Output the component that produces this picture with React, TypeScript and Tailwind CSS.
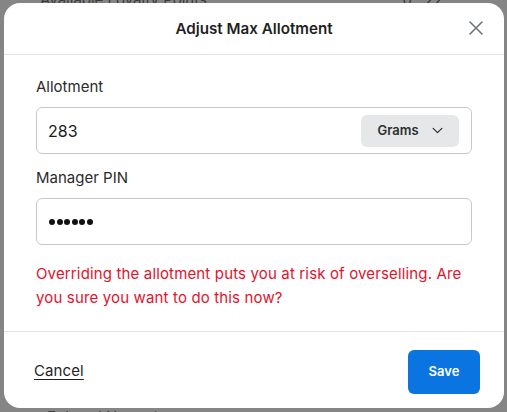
import React from 'react';

const font = { fontFamily: 'Inter, "Liberation Sans", sans-serif' };

const App: React.FC = () => {
  return (
    <div className="relative w-[507px] h-[412px] overflow-hidden bg-[#858585]" style={font}>
      {/* page behind the dialog */}
      <div className="flex flex-col h-full text-[#3b3b3b] text-[15px]">
        <div className="flex justify-between items-center h-[10px] pl-10 pr-16 -mt-[5px]">
          <span>Available Loyalty Points</span>
          <span>0 &nbsp;&nbsp;22</span>
        </div>
        <div className="mt-auto pl-[47px] h-[6px]">
          <span>Entered Name *</span>
        </div>
      </div>

      {/* dialog */}
      <div className="absolute left-[4px] top-[3px] w-[500px] h-[405px] bg-white rounded-[16px] flex flex-col">
        <div className="relative h-[52px] flex items-center justify-center border-b border-[#e3e3e3]">
          <h2 className="text-[15.2px] font-semibold text-[#1f1f1f] mt-[1px]">Adjust Max Allotment</h2>
          <button className="absolute right-[21px] top-[18px] w-[14px] h-[14px] text-[#6f767b]">
            <svg viewBox="0 0 14 14" className="w-[14px] h-[14px]" fill="none" stroke="currentColor" strokeWidth="1.6" strokeLinecap="round">
              <path d="M1 1l12 12M13 1L1 13" />
            </svg>
          </button>
        </div>

        <div className="flex-1 px-8 pt-[20px] border-b border-[#e3e3e3]">
          <label className="block text-[15px] text-[#2b2b2b] leading-[24px]">Allotment</label>
          <div className="mt-[8px] h-[47px] border border-[#c9c9c9] rounded-[6px] flex items-center pl-[11px] pr-[12px]">
            <span className="flex-1 text-[16px] text-[#1a1a1a]">283</span>
            <button className="w-[98px] h-[32px] rounded-[6px] bg-[#e5e7e9] flex items-center justify-center gap-[13px] text-[#2e2e2e]">
              <span className="text-[13px] font-semibold">Grams</span>
              <svg viewBox="0 0 12 8" className="w-[11px] h-[7px]" fill="none" stroke="currentColor" strokeWidth="1.4" strokeLinecap="round" strokeLinejoin="round">
                <path d="M1 1.5l5 5 5-5" />
              </svg>
            </button>
          </div>

          <label className="block mt-[12px] text-[15px] text-[#2b2b2b] leading-[24px]">Manager PIN</label>
          <div className="mt-[8px] h-[47px] border border-[#c9c9c9] rounded-[6px] flex items-center pl-[12px] gap-[1.6px]" aria-label="PIN">
            {[0, 1, 2, 3, 4, 5].map((i) => (
              <span key={i} className="w-[6px] h-[6px] rounded-full bg-[#111]" />
            ))}
          </div>

          <p className="mt-[17px] text-[15px] leading-[24px] tracking-[0.15px] text-[#e3122c]">
            Overriding the allotment puts you at risk of overselling. Are you sure you want to do this now?
          </p>
        </div>

        <div className="h-[76px] flex items-center justify-between pl-[30px] pr-[24px] pt-[3px]">
          <button className="text-[15px] tracking-[0.1px] text-[#1f1f1f] underline underline-offset-[3px]">Cancel</button>
          <button className="w-[72px] h-[44px] rounded-[6px] bg-[#0a74e0] text-white text-[13px] font-semibold">
            Save
          </button>
        </div>
      </div>
    </div>
  );
};

export default App;
